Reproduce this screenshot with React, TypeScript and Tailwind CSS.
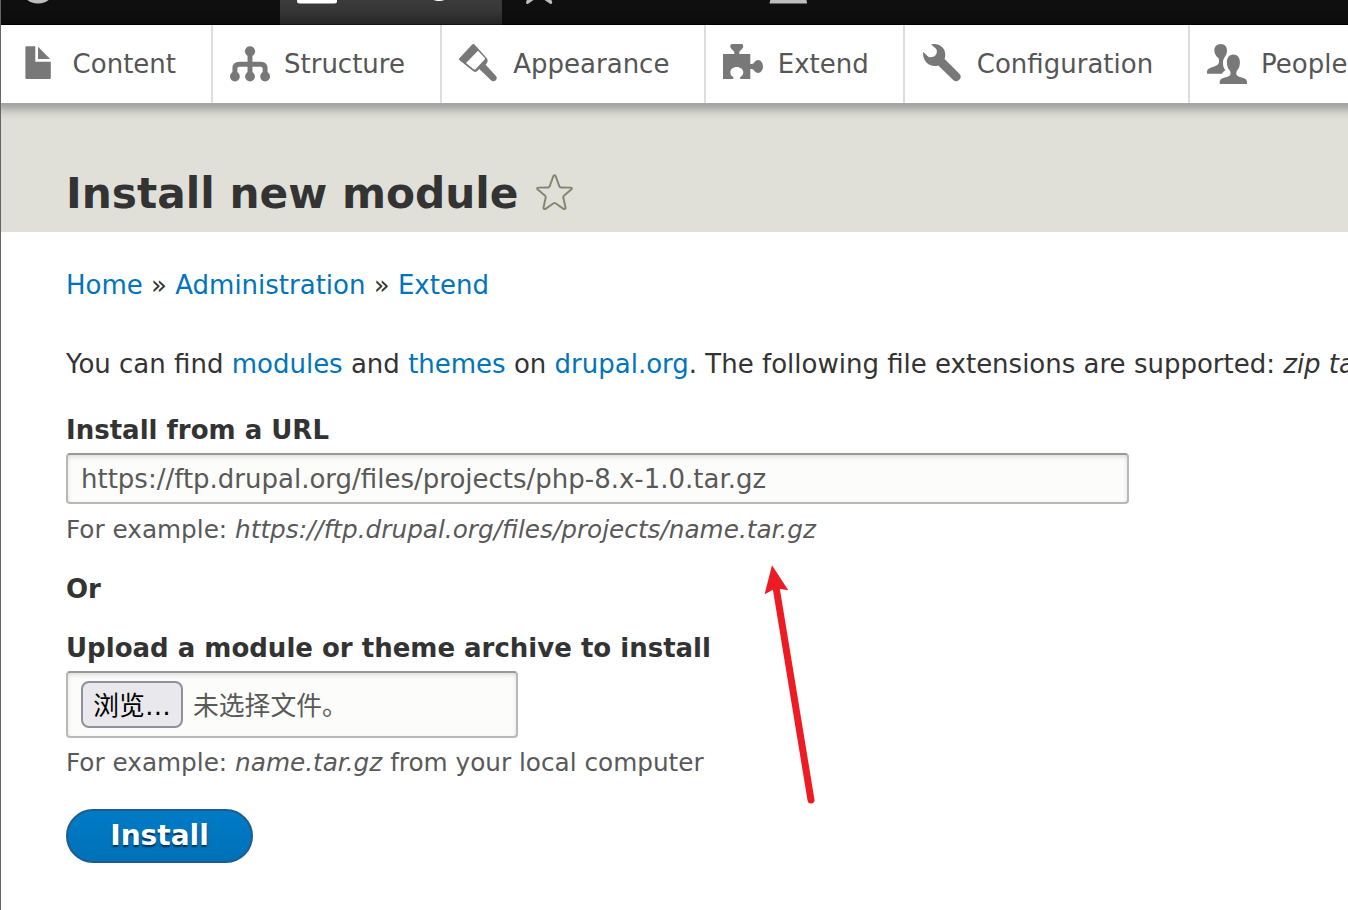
import type { ReactNode } from 'react';

function Icon({ children, fill = '#787878' }: { children: ReactNode; fill?: string }) {
  return (
    <svg className="block h-10 w-10 shrink-0" viewBox="0 0 40 40" fill={fill}>
      {children}
    </svg>
  );
}

const trayItems: { label: string; width: string; icon: ReactNode }[] = [
  {
    label: 'Content',
    width: 'w-[212px] gap-[14.6px]',
    icon: (
      <>
        <path d="M8.4 2.3H17.3V17.7H32.8V34Q32.8 35 31.8 35H8.4Q7.4 35 7.4 34V3.3Q7.4 2.3 8.4 2.3Z" />
        <path d="M20 2.8L32.2 15H20Z" />
      </>
    ),
  },
  {
    label: 'Structure',
    width: 'w-[229px] gap-[14px]',
    icon: (
      <>
        <circle cx="20" cy="7.3" r="5.1" />
        <circle cx="4.9" cy="32.5" r="4.9" />
        <circle cx="20" cy="32.5" r="4.9" />
        <circle cx="35.1" cy="32.5" r="4.9" />
        <path d="M4.9 32V24.5Q4.9 20.2 9.2 20.2H30.8Q35.1 20.2 35.1 24.5V32M20 8V32" fill="none" stroke="#787878" strokeWidth="4.9" />
      </>
    ),
  },
  {
    label: 'Appearance',
    width: 'w-[264px] gap-[14.3px]',
    icon: (
      <path
        fillRule="evenodd"
        d="M13.4 .3Q14.5 -.4 15.6 .6L27.6 14Q29.6 16.6 27.8 19.2L26.6 20.8L37 32Q38.7 34.2 36.8 36.2Q34.4 38.4 32 36.3L20.3 24.9L18.3 27Q15.8 28.9 13.7 26.8L.6 16.2Q-.6 15.2 .6 14ZM19 6.7L7 19L14.7 25.2Q15.8 25.9 16.7 25L25.6 15.6Q26.4 14.6 25.6 13.7Z"
      />
    ),
  },
  {
    label: 'Extend',
    width: 'w-[199px] gap-[14.8px]',
    icon: (
      <path d="M0 10H11.3V8.3C11.3 6.5 7.3 5.3 7.3 2.5C7.3 .8 8 0 9 0H18.5C19.5 0 20.2 .8 20.2 2.5C20.2 5.3 16.3 6.5 16.3 8.3V10H27.3V20H29C31 20 31.7 16 35 16C38 16 40 19 40 22.4C40 25.8 38 28.9 35 28.9C31.7 28.9 31 25 29 25H27.3V35H18.3C16.8 35 16.5 33.6 17.7 32.8C19.2 31.8 20.3 30.4 20.3 28.3C20.3 25.3 17.4 23 13.7 23C10 23 7.3 25.3 7.3 28.3C7.3 30.4 8.4 31.8 9.9 32.8C11.1 33.6 10.8 35 9.3 35H0Z" />
    ),
  },
  {
    label: 'Configuration',
    width: 'w-[285px] gap-[14.8px]',
    icon: (
      <path d="M9.2 .4C16.5 -1.3 23.3 3.2 23.3 10.5C23.3 12.2 23 13.8 22.6 15L37.4 29.7Q40.2 32.8 37.3 35.8Q34.1 38.8 31.2 36L16.3 21.4C8.2 23.8 .5 18 1 7.7L6.3 12.7C8.3 14.3 13.4 12.7 14.4 9.7C15.3 6.8 14.8 5.5 13.7 4.4Z" />
    ),
  },
  {
    label: 'People',
    width: 'w-[260px] gap-[14px]',
    icon: (
      <>
        <path d="M13.7 0C17.5 0 20 2.8 20 6.3C20 8.6 19.6 10.2 18.6 11.7C16.7 14.2 16 16 16 18.5C16 21.7 16.5 24 18.4 26.2C17 27 15.8 28 14.9 29.7H0V27.5C.3 23.5 7.5 23.4 10.7 20.8C12.4 19.4 12.4 15.9 11.4 13.9C8.8 12.2 7.3 9.5 7.3 6.3C7.3 2.8 10 0 13.7 0Z" />
        <path d="M26.4 10.6C30.3 10.6 32.9 13.5 32.9 18.3C32.9 21.8 32.1 24.5 29.8 26.7C28.6 30 29.3 31.4 31.5 32.4C34.5 33.8 40 33.6 40 38V40H12.7V38C12.7 33.6 18.2 33.8 21.3 32.4C23.5 31.4 24.2 30 23 26.7C20.7 24.5 19.9 21.8 19.9 18.3C19.9 13.5 22.5 10.6 26.4 10.6Z" />
      </>
    ),
  },
];

function TopBar() {
  return (
    <div className="flex h-[25px] items-end overflow-hidden bg-[#0f0f0f]">
      <div className="flex h-[78px] w-[279px] shrink-0 items-center border-b border-black pl-[17px]">
        <Icon fill="#bebebe">
          <circle cx="20" cy="20" r="17.6" />
        </Icon>
      </div>
      <div className="flex h-[78px] w-[222px] shrink-0 items-center gap-[14.8px] border-b border-[#1c1c1c] bg-linear-to-b from-[#555] to-[#303030] pl-[17px] font-bold text-white">
        <Icon fill="#fff">
          <rect x="0" y="4" width="40" height="33.6" rx="2.5" />
        </Icon>
        <span>Manage</span>
      </div>
      <div className="flex h-[78px] w-[250px] shrink-0 items-center border-b border-black pl-[17px]">
        <Icon fill="#bebebe">
          <path d="M20 2L25.5 14L38 15.5L29 24.5L33.3 36.5Q33 38.5 31 37.7L20 30.2L9.2 37.7Q7 38.5 7 36.5L11 24.5L2 15.5L14.5 14Z" />
        </Icon>
      </div>
      <div className="flex h-[78px] grow items-center border-b border-black pl-[17px]">
        <Icon fill="#bebebe">
          <path d="M20 2A9 11 0 0 1 25 22C26 28 38 27 38 37.6H.6C1 27 14 28 15 22A9 11 0 0 1 20 2Z" />
        </Icon>
      </div>
    </div>
  );
}

function Tray() {
  return (
    <nav className="relative z-10 -mr-6 flex h-20 border-b-2 border-[#a6a6a6] bg-white text-[#565656] shadow-[-2px_0_10px_4px_rgba(0,0,0,0.333)]">
      {trayItems.map((item) => (
        <a
          key={item.label}
          className={`flex h-full shrink-0 items-center border-r-2 border-[#ddd] pl-[17px] ${item.width}`}
        >
          <Icon>{item.icon}</Icon>
          <span>{item.label}</span>
        </a>
      ))}
    </nav>
  );
}

export default function App() {
  return (
    <div className="h-[910px] w-[1348px] overflow-hidden border-l border-[#656565] bg-white font-['DejaVu_Sans','Noto_Sans_CJK_SC',sans-serif] text-[26px] leading-[40px] whitespace-nowrap text-[#333]">
      <TopBar />
      <Tray />
      <header className="flex h-[127px] items-end bg-[#e0e0d8] pl-[65px]">
        <div className="flex items-center gap-[18px] pb-[8px]">
          <h1 className="text-[42.27px] leading-[60px] font-bold">Install new module</h1>
          <svg className="mb-[3px] h-[37px] w-[37px]" viewBox="0 0 38 38" fill="none" stroke="#86866f" strokeWidth="2" strokeLinejoin="round">
            <path d="M17.8 2.2Q19 .2 20.2 2.2L24 12.7Q24.4 13.8 25.6 13.8L35.4 14Q37.8 14.2 36.2 16L28.6 22.4Q27.8 23.3 28.1 24.4L30.3 34.4Q30.4 36.6 28.2 35.8L20 30Q19 29.4 18 30L9.8 35.8Q7.6 36.6 7.7 34.4L9.9 24.4Q10.2 23.3 9.4 22.4L1.8 16Q.2 14.2 2.6 14L12.4 13.8Q13.6 13.8 14 12.7Z" />
          </svg>
        </div>
      </header>
      <main className="relative flex flex-col items-start pt-[33px] pl-[65px]">
        <nav>
          <a className="text-[#0074bd]">Home</a> » <a className="text-[#0074bd]">Administration</a> » <a className="text-[#0074bd]">Extend</a>
        </nav>
        <p className="mt-[39px]">
          You can find <a className="text-[#0074bd]">modules</a> and <a className="text-[#0074bd]">themes</a> on{' '}
          <a className="text-[#0074bd]">drupal.org</a>. The following file extensions are supported: <em>zip tar</em>
        </p>
        <label className="mt-[26px] font-bold">Install from a URL</label>
        <div className="mt-[3px] flex h-[51px] w-[1063px] items-center rounded-[4px] border-2 border-[#b8b8b8] border-t-[#999] bg-[#fcfcfa] pl-[13px] text-[#595959] shadow-[inset_0_2px_4px_rgba(0,0,0,0.125)]">
          https://ftp.drupal.org/files/projects/php-8.x-1.0.tar.gz
        </div>
        <p className="mt-[6px] text-[24.72px] text-[#595959]">
          For example: <em>https://ftp.drupal.org/files/projects/name.tar.gz</em>
        </p>
        <p className="mt-[19px] font-bold">Or</p>
        <label className="mt-[19px] font-bold">Upload a module or theme archive to install</label>
        <div className="mt-[3px] flex h-[67px] w-[452px] items-center gap-[10px] rounded-[4px] border-2 border-[#b8b8b8] border-t-[#999] bg-[#fcfcfa] pl-[13px] text-[#595959] shadow-[inset_0_2px_4px_rgba(0,0,0,0.125)]">
          <button className="flex h-[47px] w-[102px] items-center justify-center rounded-[8px] border-2 border-[#8f8f9d] bg-[#e9e9ed] pt-[3px] font-['DejaVu_Sans','Noto_Sans_CJK_SC',sans-serif] text-[25.8px] leading-[40px] text-black">
            浏览…
          </button>
          <span className="pt-[3px] text-[25.8px]">未选择文件。</span>
        </div>
        <p className="mt-[5px] text-[24.72px] text-[#595959]">
          For example: <em>name.tar.gz</em> from your local computer
        </p>
        <button className="mt-[26px] h-[54px] w-[187px] rounded-full border-2 border-[#1e5c90] bg-linear-to-b from-[#007bc6] to-[#0071b8] text-[28px] leading-[48px] font-bold text-white [text-shadow:0_2px_2px_rgba(0,0,0,0.6)]">
          Install
        </button>
        <svg className="absolute top-[328px] left-[759px] h-[250px] w-[60px]" viewBox="760 560 60 250">
          <path d="M776 587L811 800" stroke="#ed1c24" strokeWidth="7" strokeLinecap="round" />
          <path d="M772 565.3L788.3 590.3L776 588.3L764.6 594.2Z" fill="#ed1c24" />
        </svg>
      </main>
    </div>
  );
}
